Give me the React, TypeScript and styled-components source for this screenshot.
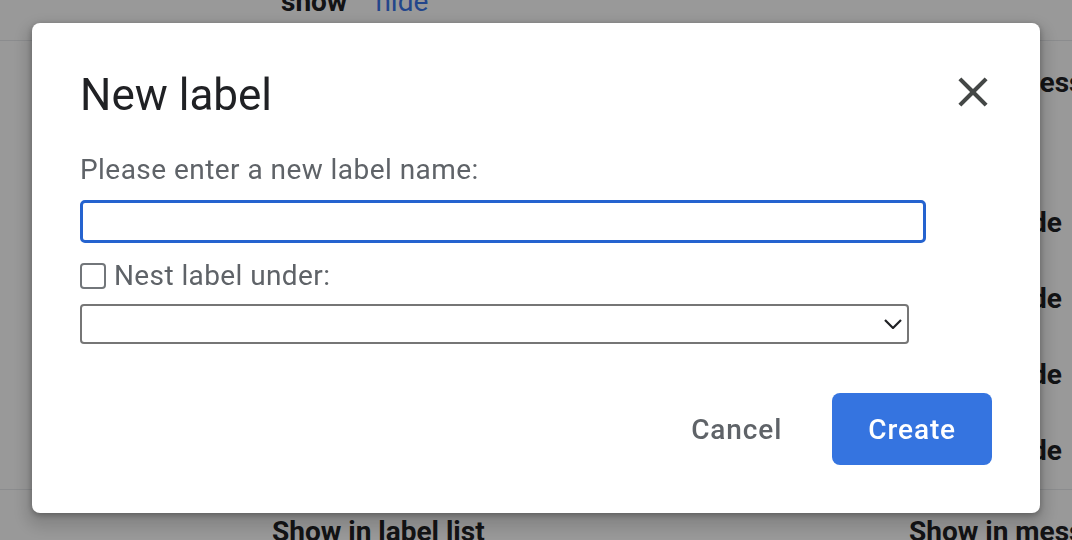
import React from "react";
import styled, { createGlobalStyle } from "styled-components";

const Global = createGlobalStyle`
  html, body { margin: 0; padding: 0; }
  body { font-family: Roboto, "Liberation Sans", sans-serif; background: #fff; }
  * { box-sizing: border-box; }
`;

/* ---------- background settings page ---------- */
const Page = styled.div`
  position: relative;
  width: 1072px;
  height: 540px;
  overflow: hidden;
  background: #fff;
  font-size: 28px;
  line-height: 36px;
  color: #202124;
`;

const Scroller = styled.div`
  margin-top: -37px;
`;

const Row = styled.div<{ $h: number; $border?: boolean; $header?: boolean }>`
  display: grid;
  grid-template-columns: 272px 637px 1fr;
  height: ${(p) => p.$h + (p.$border ? 1 : 0)}px;
  align-items: ${(p) => (p.$header ? "start" : "center")};
  padding-top: ${(p) => (p.$header ? "24px" : "0")};
  border-bottom: ${(p) => (p.$border ? "1px solid #e8eaed" : "none")};
  font-weight: ${(p) => (p.$header ? 700 : 400)};
  white-space: nowrap;
`;

const Cell = styled.div<{ $pad?: number }>`
  display: flex;
  gap: 28px;
  padding-left: ${(p) => p.$pad ?? 0}px;
`;

const Option = styled.span<{ $active?: boolean }>`
  font-weight: ${(p) => (p.$active ? 700 : 400)};
  color: ${(p) => (p.$active ? "#202124" : "#3b76e8")};
`;

/* ---------- modal ---------- */
const Overlay = styled.div`
  position: fixed;
  inset: 0;
  background: rgba(0, 0, 0, 0.4);
  display: flex;
  align-items: center;
  justify-content: center;
  padding-bottom: 4px;
`;

const Dialog = styled.div`
  width: 1008px;
  height: 490px;
  background: #fff;
  border-radius: 8px;
  box-shadow: 0 8px 16px 6px rgba(0, 0, 0, 0.15), 0 2px 6px rgba(0, 0, 0, 0.3);
  padding: 46px 48px 48px 48px;
  display: flex;
  flex-direction: column;
  font-family: Roboto, "Liberation Sans", sans-serif;
`;

const Header = styled.div`
  display: flex;
  align-items: flex-start;
`;

const Title = styled.h2`
  flex: 1;
  margin: 0;
  font-size: 44px;
  line-height: 52px;
  font-weight: 400;
  color: #202124;
`;

const CloseButton = styled.button`
  width: 50px;
  height: 50px;
  margin-top: -2px;
  margin-right: -5.5px;
  padding: 0;
  border: none;
  background: none;
  display: flex;
  align-items: center;
  justify-content: center;
  color: #444746;
  cursor: pointer;
`;

const Prompt = styled.div`
  margin-top: 31px;
  font-size: 28px;
  line-height: 36px;
  letter-spacing: 0.45px;
  color: #5f6368;
`;

const NameInput = styled.input`
  margin-top: 12px;
  width: 846px;
  height: 43px;
  border: 3px solid #2563cf;
  border-radius: 5px;
  outline: none;
  font-size: 28px;
  padding: 0 10px;
`;

const CheckRow = styled.label`
  margin-top: 15px;
  height: 36px;
  display: flex;
  align-items: center;
  gap: 8px;
  font-size: 28px;
  line-height: 36px;
  letter-spacing: 0.4px;
  color: #5f6368;
`;

const CheckBox = styled.span`
  width: 26px;
  height: 26px;
  border: 2px solid #72767a;
  border-radius: 4px;
  flex: none;
`;

const SelectBox = styled.div`
  margin-top: 10px;
  width: 829px;
  height: 40px;
  border: 2px solid #767676;
  border-radius: 4px;
  display: flex;
  align-items: center;
  justify-content: flex-end;
  padding-right: 5px;
`;

const Footer = styled.div`
  margin-top: 49px;
  display: flex;
  justify-content: flex-end;
  gap: 16px;
`;

const Button = styled.button<{ $primary?: boolean }>`
  height: 72px;
  padding: 0 ${(p) => (p.$primary ? 36 : 34)}px;
  border: none;
  border-radius: 8px;
  font-family: Roboto, "Liberation Sans", sans-serif;
  font-size: 28px;
  font-weight: 500;
  letter-spacing: 0.9px;
  background: ${(p) => (p.$primary ? "#3574e0" : "transparent")};
  color: ${(p) => (p.$primary ? "#fff" : "#5f6368")};
  cursor: pointer;
`;

const CloseIcon = () => (
  <svg width="50" height="50" viewBox="0 0 24 24" fill="currentColor">
    <path d="M19 6.41L17.59 5 12 10.59 6.41 5 5 6.41 10.59 12 5 17.59 6.41 19 12 13.41 17.59 19 19 17.59 13.41 12z" />
  </svg>
);

const Chevron = () => (
  <svg width="18" height="10" viewBox="0 0 18 10" fill="none">
    <polyline points="1,1 9,9 17,1" stroke="#202124" strokeWidth="2.2" />
  </svg>
);

const dataRows = ["Family", "Receipts", "Travel", "Work"];

export default function App() {
  return (
    <>
      <Global />
      <Page>
        <Scroller>
          <Row $h={77} $border>
            <Cell />
            <Cell $pad={9}>
              <Option $active>show</Option>
              <Option>hide</Option>
            </Cell>
            <Cell />
          </Row>
          <Row $h={144} $header>
            <Cell />
            <Cell>Show in label list</Cell>
            <Cell>Show in message list</Cell>
          </Row>
          {dataRows.map((name, i) => (
            <Row key={name} $h={76} $border={i === dataRows.length - 1}>
              <Cell />
              <Cell>
                <Option $active>show</Option>
                <Option>hide</Option>
                <Option>show if unread</Option>
              </Cell>
              <Cell $pad={4}>
                <Option>show</Option>
                <Option $active>hide</Option>
              </Cell>
            </Row>
          ))}
          <Row $h={76} $header>
            <Cell />
            <Cell>Show in label list</Cell>
            <Cell>Show in message list</Cell>
          </Row>
        </Scroller>
      </Page>
      <Overlay>
        <Dialog role="dialog">
          <Header>
            <Title>New label</Title>
            <CloseButton aria-label="Close">
              <CloseIcon />
            </CloseButton>
          </Header>
          <Prompt>Please enter a new label name:</Prompt>
          <NameInput />
          <CheckRow>
            <CheckBox />
            Nest label under:
          </CheckRow>
          <SelectBox>
            <Chevron />
          </SelectBox>
          <Footer>
            <Button>Cancel</Button>
            <Button $primary>Create</Button>
          </Footer>
        </Dialog>
      </Overlay>
    </>
  );
}
